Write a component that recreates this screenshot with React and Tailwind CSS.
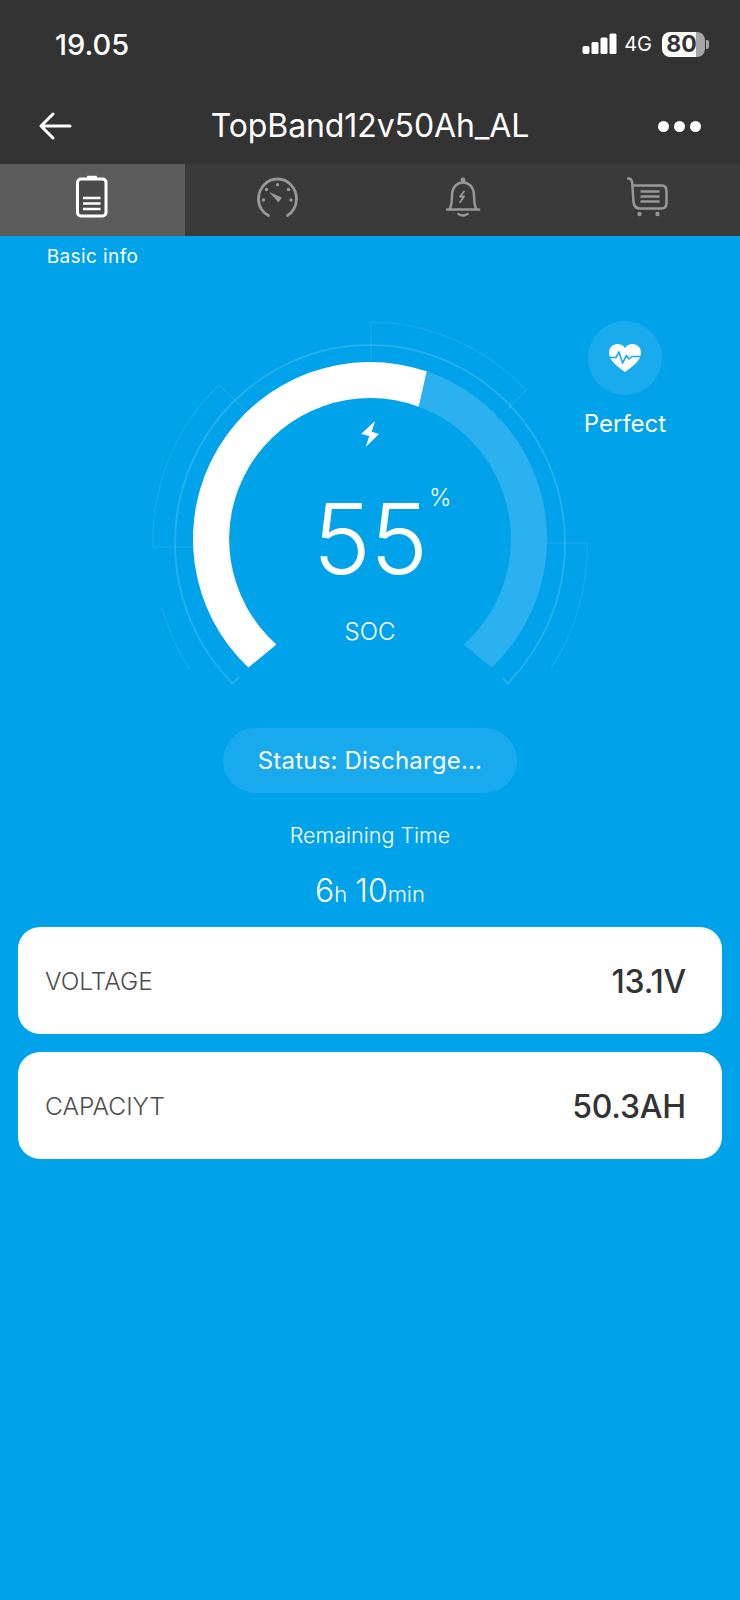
import React from "react";

const Tab = ({ active, children }) => (
  <div className={active ? "h-full flex items-center justify-center bg-[#5c5c5c]" : "h-full flex items-center justify-center"}>
    {children}
  </div>
);

const Row = ({ label, value }) => (
  <div className="h-[107px] rounded-[22px] bg-white flex items-center justify-between pl-[27px] pr-[36px] pt-[2px]">
    <span className="text-[24.5px] font-light text-[#4d4d4d]">{label}</span>
    <span className="text-[32px] font-[450] tracking-[-0.2px] text-[#333333]">{value}</span>
  </div>
);

export default function App() {
  return (
    <div className="min-h-[1600px] w-[740px] bg-[#00a2ea] font-['Inter',sans-serif] text-white">
      <div className="bg-[#333333]">
        <div className="h-[88px] flex items-center justify-between pl-[55px] pr-[35px]">
          <span className="pt-[1px] text-[29px] font-medium leading-none">19.05</span>
          <div className="flex items-center">
            <svg width="35" height="22" viewBox="0 0 35 22" fill="#fff">
              <rect x="0.5" y="13" width="7" height="8" rx="2" />
              <rect x="9.5" y="9" width="7" height="12" rx="1.5" />
              <rect x="18.5" y="4.5" width="7" height="16.5" rx="1.5" />
              <rect x="27.5" y="0.5" width="7" height="20.5" rx="1.5" />
            </svg>
            <span className="ml-[7px] text-[20px] leading-none">4G</span>
            <div className="relative ml-[10px] h-[25px] w-[43px] rounded-[8px] bg-[linear-gradient(90deg,#ffffff_79%,#a6a6a6_79%)] flex items-center justify-center">
              <span className="pr-[4px] text-[23px] font-bold leading-none text-[#333333]">80</span>
              <span className="absolute right-[-4px] top-[8px] h-[9px] w-[3px] rounded-r-[2px] bg-[#a6a6a6]"></span>
            </div>
          </div>
        </div>
        <div className="h-[76px] flex items-center justify-between px-[38px]">
          <div className="w-[48px]">
            <svg width="36" height="30" viewBox="0 0 36 30" fill="none" stroke="#fff" strokeWidth="3" strokeLinecap="round" strokeLinejoin="round">
              <path d="M32 15H3M15 3L3 15L15 27" />
            </svg>
          </div>
          <span className="text-[32px] tracking-[-0.1px] leading-none">TopBand12v50Ah_AL</span>
          <div className="w-[48px] flex justify-end gap-[5px] pr-[1px]">
            <span className="h-[11px] w-[11px] rounded-full bg-white"></span>
            <span className="h-[11px] w-[11px] rounded-full bg-white"></span>
            <span className="h-[11px] w-[11px] rounded-full bg-white"></span>
          </div>
        </div>
      </div>

      <div className="h-[72px] grid grid-cols-4 bg-[#3a3a3a]">
        <Tab active>
          <svg width="40" height="48" viewBox="0 0 40 48" fill="none" stroke="#fff" strokeWidth="3" strokeLinecap="round" className="mr-[1px] -mt-[2px]">
            <rect x="15" y="0.8" width="10" height="3.2" rx="1" fill="#fff" stroke="none" />
            <rect x="5.5" y="4" width="28.5" height="37" rx="3.5" fill="#4b4b4b" />
            <path d="M11 23H28.5M11 28.5H28.5M11 34H28.5" strokeWidth="2.5" strokeLinecap="butt" />
          </svg>
        </Tab>
        <Tab>
          <svg width="42" height="48" viewBox="0 0 42 48" fill="none" stroke="#989898" strokeWidth="2.8" strokeLinecap="round" className="-mt-[1px]">
            <path d="M11.5 39.5C6 37 1.5 31 1.5 23C1.5 12 10 3 20.5 3C31 3 39.5 12 39.5 23C39.5 31 35 37 30.5 39.5" />
            <g fill="#989898" stroke="none">
              <circle cx="20.5" cy="8.8" r="1.7" />
              <circle cx="9.5" cy="13.5" r="1.7" />
              <circle cx="31.5" cy="13.5" r="1.7" />
              <circle cx="6.5" cy="24" r="1.7" />
              <circle cx="34" cy="24" r="1.7" />
              <path d="M12 16L25 21.5L21.5 26.5Z" />
            </g>
          </svg>
        </Tab>
        <Tab>
          <svg width="40" height="48" viewBox="0 0 40 48" fill="none" stroke="#989898" strokeWidth="2.5" strokeLinecap="round" strokeLinejoin="round" className="-mt-[1px]">
            <circle cx="20" cy="4" r="2.4" fill="#989898" stroke="none" />
            <path d="M7 33C8.5 29 9 26 9 20C9 11 14 6.5 20 6.5C26 6.5 31 11 31 20C31 26 31.5 29 33 33" />
            <path d="M4 33.5H36" />
            <path d="M15.5 38Q20 41 24.5 38" />
            <path d="M21 15.5L17 20.5H21L17 26.2" strokeWidth="1.8" />
          </svg>
        </Tab>
        <Tab>
          <svg width="41" height="48" viewBox="0 0 41 48" fill="none" stroke="#989898" strokeWidth="2.5" strokeLinecap="round" strokeLinejoin="round" className="-mt-[1px]">
            <path d="M1 2.5C4 2.5 5 4 5.2 7L6.5 26C7 30.5 9 32.5 13 32.5H34.5C38 32.5 39.5 30.5 39.5 27V15C39.5 11.5 38 9.5 34.5 9.5H5.8" />
            <path d="M13.5 15.5H32.5M13.5 20.5H32.5M13.5 25.5H32.5" strokeLinecap="butt" />
            <circle cx="12.5" cy="38" r="2.2" fill="#989898" stroke="none" />
            <circle cx="30.5" cy="38" r="2.2" fill="#989898" stroke="none" />
          </svg>
        </Tab>
      </div>

      <div className="h-[42px] w-[185px] flex items-center justify-center text-[19px] tracking-[0.4px]">Basic info</div>

      <div className="relative h-[450px]">
        <svg width="740" height="450" viewBox="0 278 740 450" fill="none" className="block">
          <g stroke="#ffffff" strokeOpacity="0.14" strokeWidth="2">
            <path d="M232 683A195 198 0 1 1 508 683" />
            <path d="M232 684L239 677M509 685L503 678" />
          </g>
          <g stroke="#ffffff" strokeOpacity="0.08" strokeWidth="1.5">
            <path d="M371 362V322A217 217 0 0 1 526 390L504 413" />
            <path d="M193 547H153A217 217 0 0 1 219 385L243 408" />
            <path d="M547 543H587L587 549A222 222 0 0 1 551 668" />
            <path d="M162 607A220 220 0 0 0 190 670" />
          </g>
          <path d="M426.7 371.3A177 177 0 0 1 491.6 667.6L463.6 644.4A141 141 0 0 0 418.7 406.7Z" fill="#2bb0f0" />
          <path d="M248.4 667.6A177 177 0 0 1 426.7 371.3L418.7 406.7A141 141 0 0 0 276.4 644.4Z" fill="#ffffff" />
          <path d="M375 421L361 434L369.3 436L365.7 447L379 434L371.7 431.7Z" fill="#ffffff" />
        </svg>
        <div className="absolute left-[270px] top-[212px] w-[200px] text-center text-[98px] font-light leading-none tracking-[-1px]">55</div>
        <div className="absolute left-[429px] top-[208px] text-[24px] font-light leading-none">%</div>
        <div className="absolute left-[270px] top-[342px] w-[200px] text-center text-[24px] font-light leading-none">SOC</div>
        <div className="absolute left-[570px] top-[43px] w-[110px] flex flex-col items-center">
          <div className="h-[74px] w-[74px] rounded-full bg-[#1aabed] flex items-center justify-center">
            <svg width="34" height="30" viewBox="0 0 34 30">
              <path d="M17 29C10 24 1 18 1 9.5C1 4.5 5 1 9.5 1C12.5 1 15.5 2.5 17 5C18.5 2.5 21.5 1 24.5 1C29 1 33 4.5 33 9.5C33 18 24 24 17 29Z" fill="#fff" />
              <path d="M1 14.5H8L11 9L14.5 20L18.5 12.5L21 16L24 13.5H33" fill="none" stroke="#1aabed" strokeWidth="1.6" strokeLinejoin="round" />
            </svg>
          </div>
          <span className="mt-[17px] text-[24px] leading-none">Perfect</span>
        </div>
      </div>

      <div className="mx-auto h-[65px] w-[294px] rounded-full bg-[#18aaed] flex items-center justify-center text-[24px] tracking-[0.2px]">Status: Discharge...</div>
      <div className="mt-[28px] text-center text-[21.5px] font-light leading-[28px]">Remaining Time</div>
      <div className="mt-[21px] h-[41px] flex items-baseline justify-center font-light leading-[42px]">
        <span className="text-[32px]">6</span>
        <span className="text-[22px]">h</span>
        <span className="ml-[8px] text-[32px]">10</span>
        <span className="text-[22px]">min</span>
      </div>

      <div className="mt-[16px] mx-[18px] flex flex-col gap-[18px]">
        <Row label="VOLTAGE" value="13.1V" />
        <Row label="CAPACIYT" value="50.3AH" />
      </div>
    </div>
  );
}
